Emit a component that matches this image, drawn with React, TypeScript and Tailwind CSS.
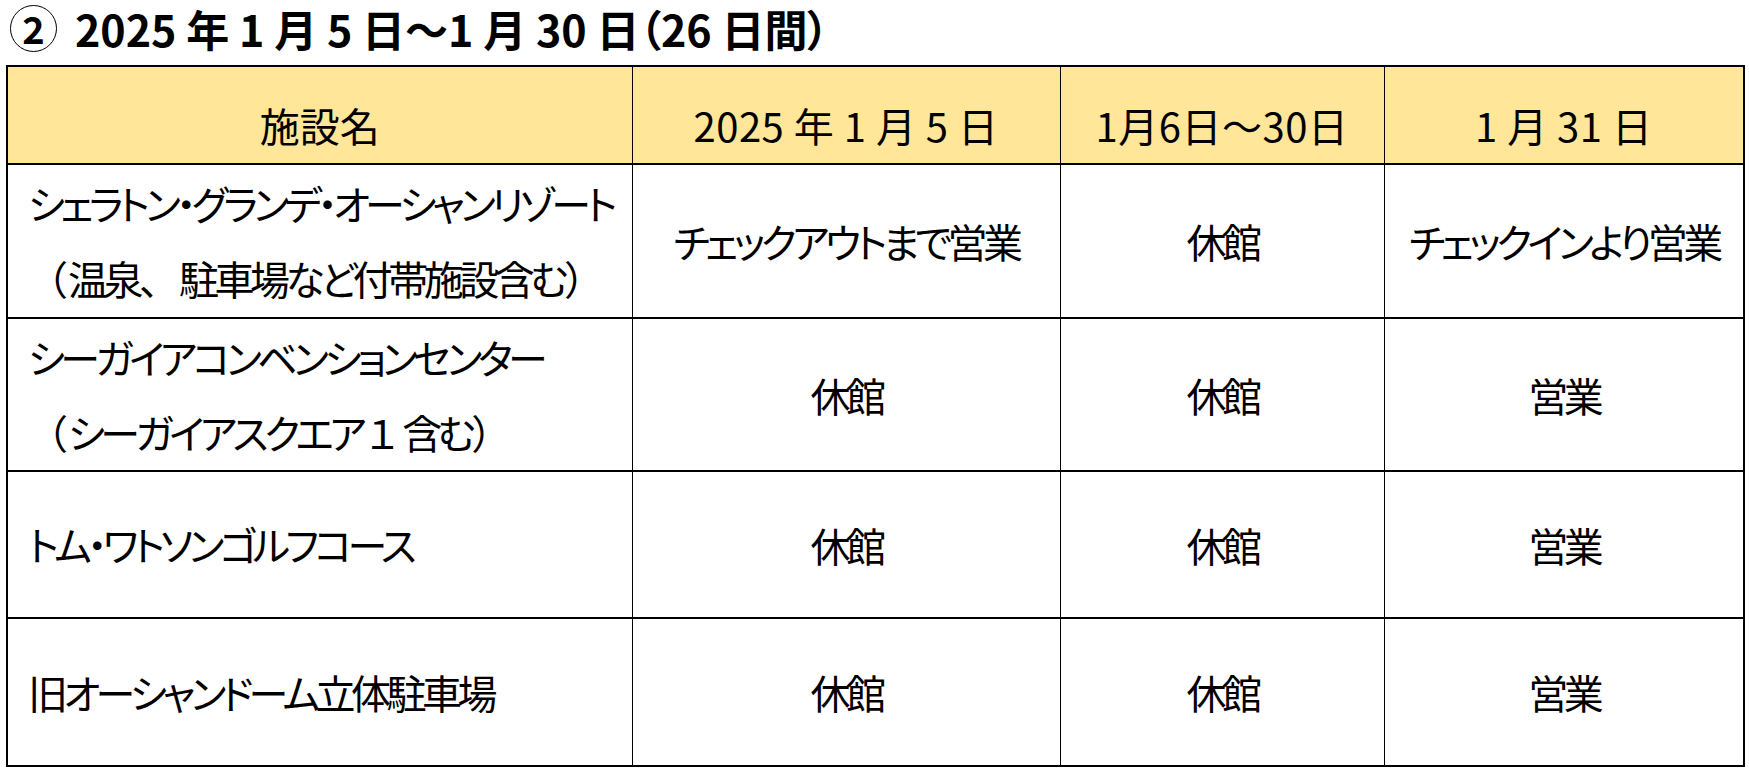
// Facility schedule table (period 2)
const rows = [
  {
    name: ['シェラトン・グランデ・オーシャンリゾート', '（温泉、駐車場など付帯施設含む）'],
    jan5: 'チェックアウトまで営業',
    mid: '休館',
    jan31: 'チェックインより営業',
    h: 'h-[154px]',
  },
  {
    name: ['シーガイアコンベンションセンター', '（シーガイアスクエア１含む）'],
    jan5: '休館',
    mid: '休館',
    jan31: '営業',
    h: 'h-[153px]',
  },
  {
    name: ['トム・ワトソンゴルフコース'],
    jan5: '休館',
    mid: '休館',
    jan31: '営業',
    h: 'h-[147px]',
  },
  {
    name: ['旧オーシャンドーム立体駐車場'],
    jan5: '休館',
    mid: '休館',
    jan31: '営業',
    h: 'h-[148px]',
  },
]

// full-width punctuation keeps its full em box, like the original sheet
function Line({ text }: { text: string }) {
  const parts = text.split(/([（）、１])/).filter(Boolean)
  return (
    <>
      {parts.map((p, i) =>
        /^[（）、１]$/.test(p) ? (
          <span key={i} className="[font-feature-settings:normal] tracking-normal">{p}</span>
        ) : (
          <span key={i}>{p}</span>
        )
      )}
    </>
  )
}

export default function App() {
  return (
    <div className="w-[1749px] h-[771px] bg-white text-black font-['Noto_Sans_CJK_JP','Noto_Sans',sans-serif] [font-feature-settings:'palt']">
      <div className="h-[65px] pl-[10px] flex items-start">
        <h2 className="text-[43px] font-bold leading-[56px] flex items-center">
          {/* circled number, drawn as a ring round a bold digit */}
          <span className="shrink-0 inline-flex items-center justify-center w-[47px] h-[47px] rounded-full border-[1.5px] border-black text-[38px] leading-none mr-[18px]">
            2
          </span>
          <span className="whitespace-nowrap">2025 年 1 月 5 日～1 月 30 日（26 日間）</span>
        </h2>
      </div>

      <div className="pl-[6px]">
        <table className="w-[1737px] border-collapse table-fixed border-2 border-black text-[40px]">
          <colgroup>
            <col className="w-[625px]" />
            <col className="w-[428px]" />
            <col className="w-[324px]" />
            <col className="w-[360px]" />
          </colgroup>
          <thead>
            <tr className="h-[98px] bg-[#ffe699]">
              <th className="font-normal border-x-[1.5px] border-black align-bottom pb-[8px] text-center">施設名</th>
              <th className="font-normal border-x-[1.5px] border-black align-bottom pb-[8px] text-center tracking-[0.5px]">2025 年 1 月 5 日</th>
              <th className="font-normal border-x-[1.5px] border-black align-bottom pb-[8px] text-center tracking-[0.5px]">1月6日～30日</th>
              <th className="font-normal border-x-[1.5px] border-black align-bottom pb-[8px] text-center tracking-[0.5px]">1 月 31 日</th>
            </tr>
          </thead>
          <tbody className="tracking-[-4.5px]">
            {rows.map((r) => (
              <tr key={r.name[0]} className={`${r.h} border-t-2 border-black`}>
                <td className="border-x-[1.5px] border-black pl-[20px] align-middle">
                  {r.name.map((line) => (
                    <div key={line} className="leading-[75px] whitespace-nowrap">
                      <Line text={line} />
                    </div>
                  ))}
                </td>
                <td className="border-x-[1.5px] border-black text-center align-middle whitespace-nowrap">{r.jan5}</td>
                <td className="border-x-[1.5px] border-black text-center align-middle">{r.mid}</td>
                <td className="border-x-[1.5px] border-black text-center align-middle whitespace-nowrap">{r.jan31}</td>
              </tr>
            ))}
          </tbody>
        </table>
      </div>
    </div>
  )
}
